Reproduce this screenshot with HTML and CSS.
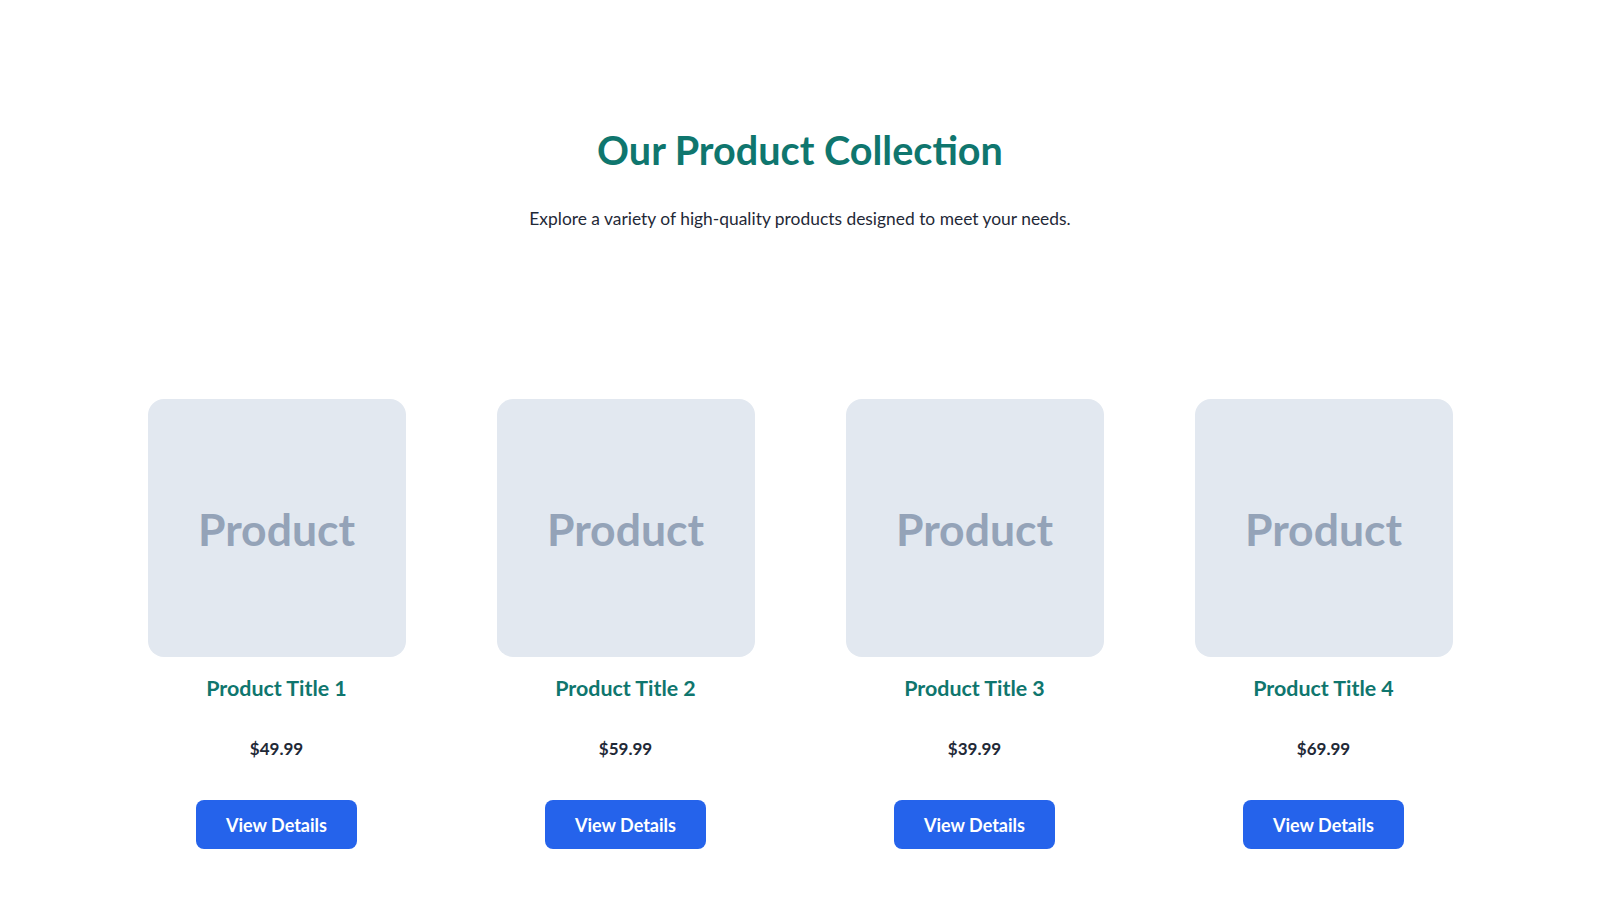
FILE: index.html
```html
<!DOCTYPE html>
<html lang="en">
<head>
    <meta charset="UTF-8">
    <meta name="viewport" content="width=device-width, initial-scale=1.0">
    <title>Our Product Collection</title>
    <link rel="stylesheet" href="styles.css">
</head>
<body>
    <section class="collection">
        <header class="collection-header">
            <h1>Our Product Collection</h1>
            <p>Explore a variety of high-quality products designed to meet your needs.</p>
        </header>

        <div class="product-grid">
            <div class="product-card">
                <div class="product-image">Product</div>
                <h2 class="product-title">Product Title 1</h2>
                <p class="product-price">$49.99</p>
                <button class="details-btn">View Details</button>
            </div>
            <div class="product-card">
                <div class="product-image">Product</div>
                <h2 class="product-title">Product Title 2</h2>
                <p class="product-price">$59.99</p>
                <button class="details-btn">View Details</button>
            </div>
            <div class="product-card">
                <div class="product-image">Product</div>
                <h2 class="product-title">Product Title 3</h2>
                <p class="product-price">$39.99</p>
                <button class="details-btn">View Details</button>
            </div>
            <div class="product-card">
                <div class="product-image">Product</div>
                <h2 class="product-title">Product Title 4</h2>
                <p class="product-price">$69.99</p>
                <button class="details-btn">View Details</button>
            </div>
        </div>
    </section>
</body>
</html>
```

FILE: styles.css
```css
* {
    margin: 0;
    padding: 0;
    box-sizing: border-box;
}

body {
    background: #ffffff;
    font-family: "Lato", "Noto Sans", sans-serif;
    color: #1f2937;
}

.collection {
    padding: 124px 0 60px;
}

.collection-header {
    text-align: center;
}

.collection-header h1 {
    color: #0f766e;
    font-size: 39.6px;
    font-weight: 700;
    line-height: 52px;
}

.collection-header p {
    margin-top: 31px;
    font-size: 17.4px;
    line-height: 24px;
    color: #1f2937;
}

.product-grid {
    display: grid;
    grid-template-columns: repeat(4, 258px);
    justify-content: center;
    column-gap: 91px;
    margin-top: 168px;
}

.product-card {
    display: flex;
    flex-direction: column;
    align-items: center;
}

.product-image {
    width: 258px;
    height: 258px;
    background: #e2e8f0;
    border-radius: 16px;
    display: flex;
    align-items: center;
    justify-content: center;
    font-size: 44.5px;
    font-weight: 700;
    color: #94a3b8;
}

.product-title {
    margin-top: 17px;
    font-size: 21.4px;
    font-weight: 700;
    line-height: 28px;
    color: #0f766e;
}

.product-price {
    margin-top: 35px;
    font-size: 17px;
    font-weight: 700;
    line-height: 24px;
    color: #1f2937;
}

.details-btn {
    margin-top: 39px;
    width: 161px;
    height: 49px;
    background-color: #2563eb;
    color: #ffffff;
    border: none;
    border-radius: 8px;
    font-family: inherit;
    font-size: 18px;
    font-weight: 700;
    cursor: pointer;
}

.details-btn:hover {
    background-color: #1d4ed8;
}
```
